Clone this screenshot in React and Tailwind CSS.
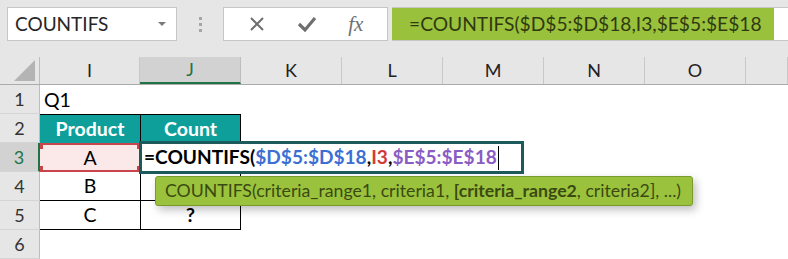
import { Fragment } from "react";

const cols = [
  { l: "I", w: "w-[100px]" },
  { l: "J", w: "w-[101px]", active: true },
  { l: "K", w: "w-[101px]" },
  { l: "L", w: "w-[101px]" },
  { l: "M", w: "w-[101px]" },
  { l: "N", w: "w-[101px]" },
  { l: "O", w: "w-[101px]" },
  { l: "", w: "flex-1" },
];

const RowHead = ({ n, active }) => (
  <div
    className={
      active
        ? "w-[40px] h-full flex items-center justify-center bg-[#d2d2d2] text-[#217346] text-[18px] border-r-2 border-[#217346] border-b border-b-[#d4d4d4]"
        : "w-[40px] h-full flex items-center justify-center bg-[#e6e6e6] text-[#333] text-[18px] border-r border-[#bdbdbd] border-b border-b-[#d4d4d4]"
    }
  >
    {n}
  </div>
);

const App = () => {
  return (
    <div className="w-[788px] h-[259px] overflow-hidden bg-white relative font-['Lato','Open_Sans',sans-serif] text-[19.5px]">
      {/* ribbon / formula bar */}
      <div className="h-[57px] bg-[#e6e6e6] flex items-start pt-[7px] pl-[7px]">
        <div className="w-[170px] h-[34px] bg-white border border-[#c6c6c6] flex items-center justify-between pl-[7px] pr-[10px] text-[#262626] text-[19px]">
          <span>COUNTIFS</span>
          <span className="w-0 h-0 border-l-[4px] border-r-[4px] border-t-[4px] border-l-transparent border-r-transparent border-t-[#7a7a7a]"></span>
        </div>
        <div className="w-[46px] h-[34px] flex flex-col items-center justify-center gap-[3px]">
          <span className="w-[3px] h-[3px] bg-[#a6a6a6]"></span>
          <span className="w-[3px] h-[3px] bg-[#a6a6a6]"></span>
          <span className="w-[3px] h-[3px] bg-[#a6a6a6]"></span>
        </div>
        <div className="w-[165px] h-[34px] bg-white border border-[#c6c6c6] flex items-center justify-around px-[8px] text-[#6a6a6a]">
          <svg width="18" height="18" viewBox="0 0 18 18">
            <path d="M3 3 L15 15 M15 3 L3 15" stroke="#6f6f6f" strokeWidth="2" fill="none" />
          </svg>
          <svg width="20" height="18" viewBox="0 0 20 18">
            <path d="M2 9 L8 15 L18 3" stroke="#6f6f6f" strokeWidth="3.2" fill="none" />
          </svg>
          <span className="font-['Liberation_Serif',serif] italic text-[21px] text-[#6f6f6f] leading-none">
            fx
          </span>
        </div>
        <div className="ml-[4px] w-[382px] h-[34px] bg-[#99c13b] border-y border-[#c6c6c6] flex items-center pl-[17px] text-[#2f3a12] text-[19.2px]">
          =COUNTIFS($D$5:$D$18,I3,$E$5:$E$18
        </div>
        <div className="flex-1 h-[34px] bg-white border-y border-[#c6c6c6]"></div>
      </div>

      {/* column headers */}
      <div className="h-[28px] flex bg-[#e6e6e6] border-b border-[#ababab] text-[#222] text-[18px]">
        <div className="w-[40px] h-full border-r border-[#bdbdbd] flex items-end justify-end pr-[4px] pb-[3px]">
          <svg width="21" height="21" viewBox="0 0 21 21">
            <path d="M21 0 L21 21 L0 21 Z" fill="#b4b4b4" />
          </svg>
        </div>
        {cols.map((c, i) => (
          <div
            key={i}
            className={
              c.active
                ? `${c.w} h-full flex items-center justify-center bg-[#d2d2d2] text-[#217346] border-b-2 border-[#217346] border-r border-r-[#bdbdbd]`
                : `${c.w} h-full flex items-center justify-center border-r border-[#c8c8c8]`
            }
          >
            {c.l}
          </div>
        ))}
      </div>

      {/* rows */}
      <div className="flex h-[29px]">
        <RowHead n="1" />
        <div className="w-[100px] flex items-center pl-[4px] text-black">Q1</div>
      </div>
      <div className="flex h-[29px]">
        <RowHead n="2" />
        <div className="w-[100px] flex items-center justify-center bg-[#0f9f9b] text-white font-bold border-t border-black">
          Product
        </div>
        <div className="w-[101px] flex items-center justify-center bg-[#0f9f9b] text-white font-bold border-t border-l border-r border-black">
          Count
        </div>
      </div>
      <div className="flex h-[29px]">
        <RowHead n="3" active />
        <div className="w-[100px] relative flex items-center justify-center bg-[#fbe9ea] border-y-2 border-[#c9444b] text-black">
          <span className="absolute left-0 top-[-2px] w-[3px] h-[6px] bg-[#c9444b]"></span>
          <span className="absolute right-0 top-[-2px] w-[3px] h-[6px] bg-[#c9444b]"></span>
          <span className="absolute left-0 bottom-[-2px] w-[3px] h-[6px] bg-[#c9444b]"></span>
          <span className="absolute right-0 bottom-[-2px] w-[3px] h-[6px] bg-[#c9444b]"></span>
          A
        </div>
        <div className="w-[101px] border-l border-r border-black"></div>
      </div>
      <div className="flex h-[29px]">
        <RowHead n="4" />
        <div className="w-[100px] flex items-center justify-center text-black border-b border-black">B</div>
        <div className="w-[101px] border-l border-r border-b border-black"></div>
      </div>
      <div className="flex h-[29px]">
        <RowHead n="5" />
        <div className="w-[100px] flex items-center justify-center text-black border-b border-black">C</div>
        <div className="w-[101px] flex items-center justify-center font-bold text-black border-l border-r border-b border-black">
          ?
        </div>
      </div>
      <div className="flex h-[29px]">
        <RowHead n="6" />
      </div>

      {/* in-cell editor */}
      <div className="absolute left-[139px] top-[141px] w-[385px] h-[33px] bg-white border-[3px] border-[#1d5a5c] flex items-center pl-[2px] font-bold text-[19.1px]">
        <span className="text-black">=COUNTIFS(</span>
        <span className="text-[#3b6fd4]">$D$5:$D$18</span>
        <span className="text-black">,</span>
        <span className="text-[#d23a3a]">I3</span>
        <span className="text-black">,</span>
        <span className="text-[#8a5cc4]">$E$5:$E$18</span>
        <span className="ml-[1px] w-[1px] h-[24px] bg-black"></span>
      </div>

      {/* function tooltip */}
      <div className="absolute left-[155px] top-[176px] w-[538px] h-[30px] bg-[#9bc23c] border border-[#7a9b2c] rounded-[3px] shadow-[3px_4px_8px_rgba(0,0,0,0.25)] flex items-center pl-[9px] text-[#3a4a12] text-[17.7px] whitespace-nowrap">
        COUNTIFS(criteria_range1, criteria1,&nbsp;<b>[criteria_range2</b>, criteria2], ...)
      </div>
    </div>
  );
};
export default App;
